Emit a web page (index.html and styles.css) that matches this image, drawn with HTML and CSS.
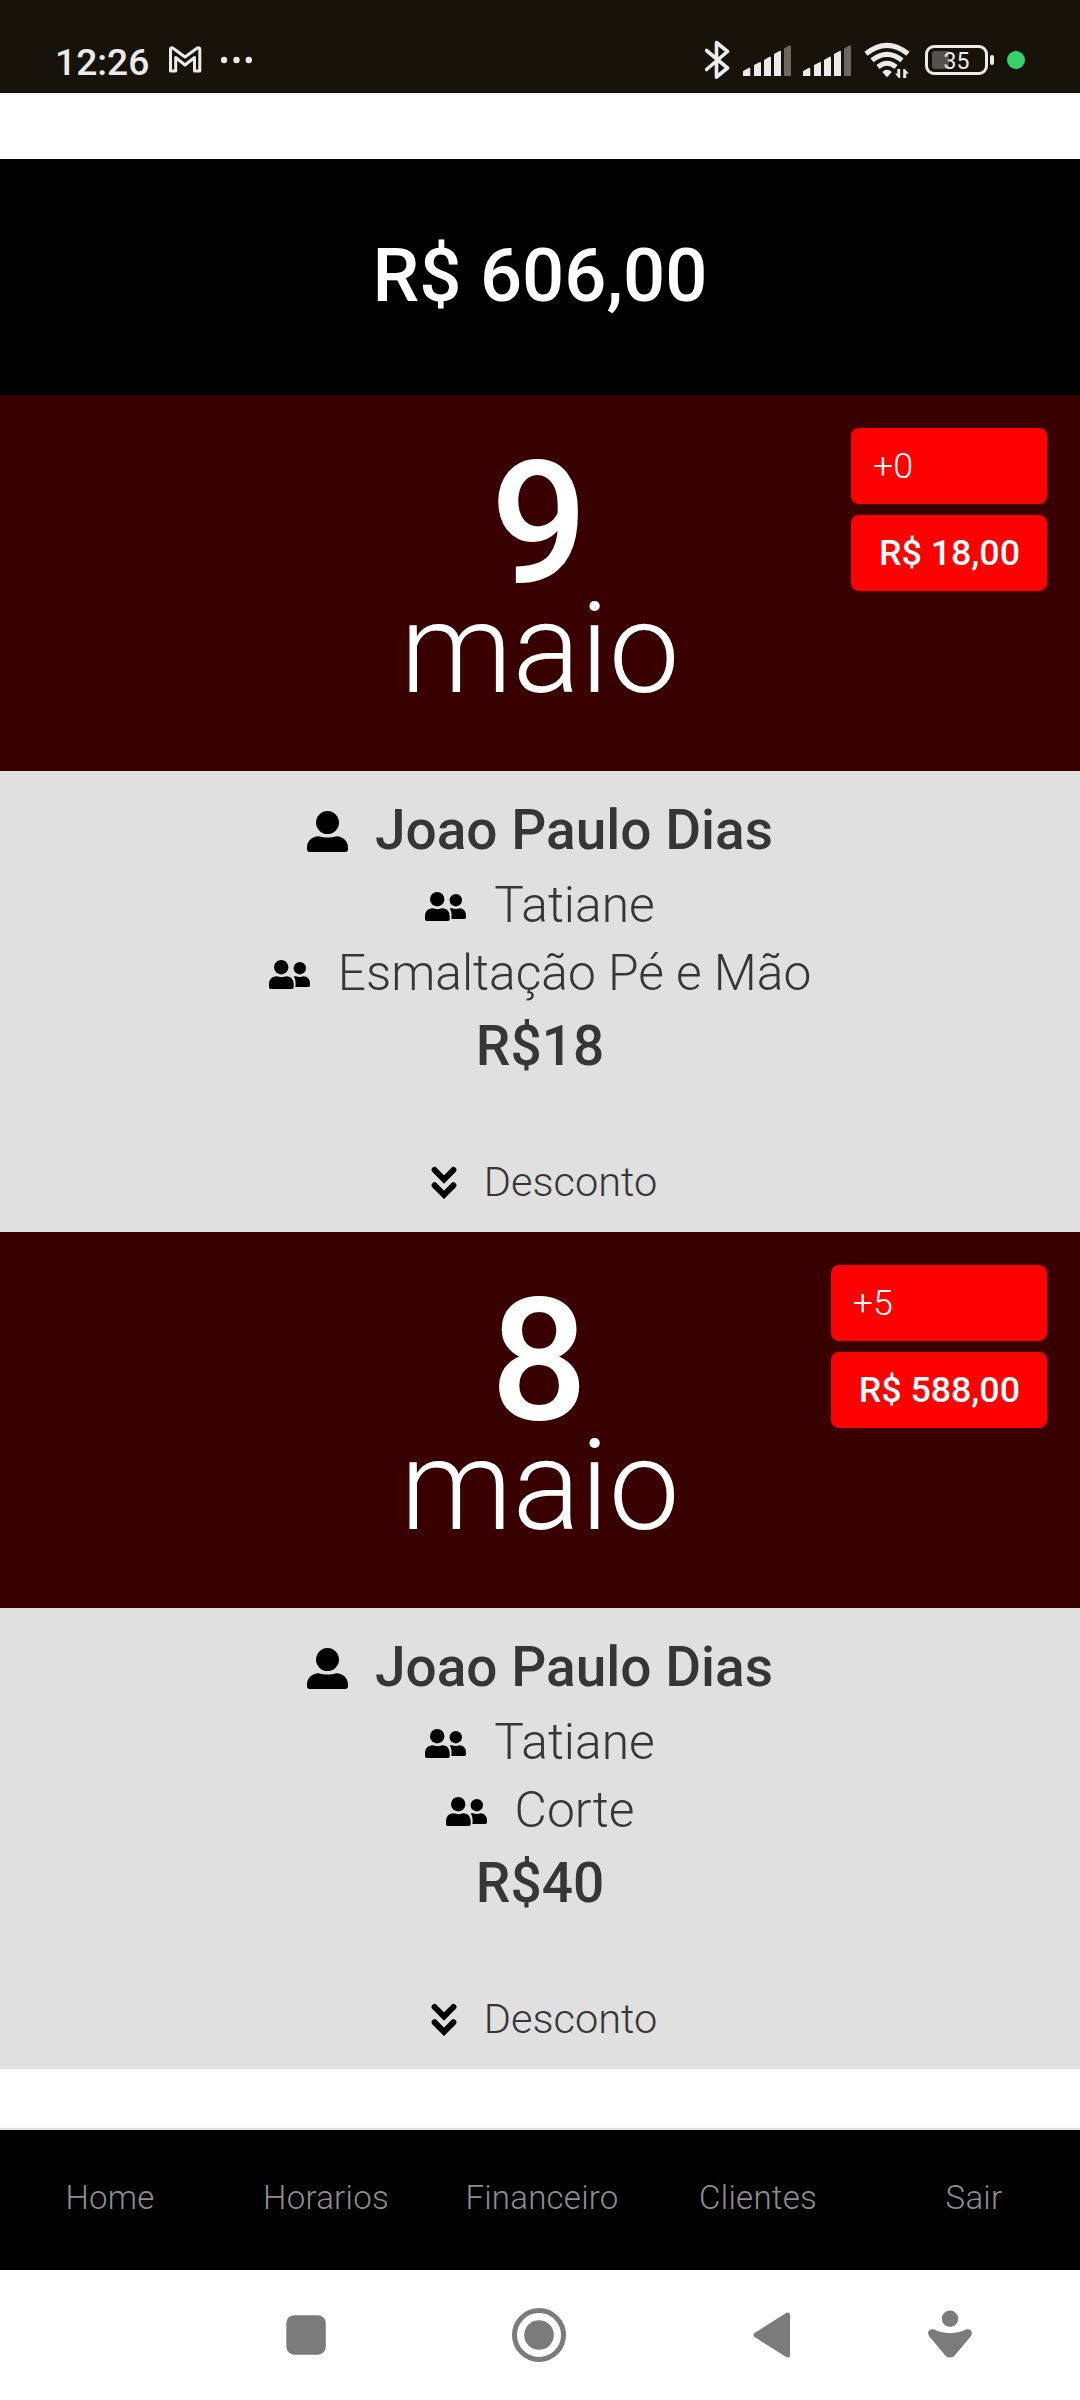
FILE: index.html
```html
<!DOCTYPE html>
<html lang="pt-BR">
<head>
<meta charset="utf-8">
<title>Financeiro</title>
<link rel="stylesheet" href="styles.css">
</head>
<body>
<svg class="defs" width="0" height="0" aria-hidden="true">
  <symbol id="person" viewBox="0 0 41 41">
    <circle cx="20.5" cy="11.6" r="11.5"/>
    <path d="M2.8 41C1 41 0 40 0 38.200V36.500C0 30 5 25.400 11.500 25.200C17 26.900 24 26.900 29.500 25.200C36 25.400 41 30 41 36.500V38.200C41 40 40 41 38.200 41Z"/>
  </symbol>
  <symbol id="persons" viewBox="0 0 41 29">
    <circle cx="12.200" cy="7.200" r="7.200"/>
    <circle cx="30.800" cy="8.200" r="6.200"/>
    <path d="M1.800 29C.6 29 0 28.300 0 27V24.500C0 19.500 3 16.500 7.500 16.300C10.500 17.400 14.500 17.400 17.500 16.300C22 16.500 24.700 19.500 24.700 24.500V27C24.700 28.300 24 29 22.900 29Z"/>
    <path d="M24.700 16.500C25.500 16.200 26.200 16.300 27 16.300C29.500 17.100 32 17.100 34.500 16.300C38.500 16.500 41 19.300 41 23.500V25C41 26.300 40.400 27 39.200 27H26.400C26.800 23.500 26.800 19 24.700 16.500Z"/>
  </symbol>
  <symbol id="chevrons" viewBox="0 0 26 33">
    <path d="M3.600 4L13 13.500L22.400 4M3.600 19.300L13 28.800L22.400 19.300" fill="none" stroke="#000" stroke-width="6" stroke-linecap="round"/>
  </symbol>
  <symbol id="signal" viewBox="0 40 48 40">
    <path d="M0 76V71.500Q0 71 1 70.600L6 67.700Q7.300 67.500 7.300 69V76Z M11 76V65L17 62Q18 62 18 63V76Z M21 76V60L27 56.500Q28 56.500 28 58V76Z M31 76V54L37 50.700Q38 50.700 38 52V76Z"/>
    <path class="signal-off" d="M41 76V48.500L46.500 45.300Q48 45.300 48 47V76Z"/>
  </symbol>
</svg>

<header class="status">
  <span class="clock">12:26</span>
  <svg class="mail" width="34" height="40" viewBox="168 40 34 40"><path d="M170.500 71V49.200Q170.500 47 173 48.200L185 57L197 48.200Q199.800 47 199.800 49.200V71H194.500V57.500L185 65L175.700 57.500V71Z"/></svg>
  <svg class="more" width="32" height="40" viewBox="221 40 32 40"><circle cx="224" cy="60" r="3.200"/><circle cx="236.500" cy="60" r="3.200"/><circle cx="248.800" cy="60" r="3.200"/></svg>
  <div class="status-right">
    <svg class="bluetooth" width="25" height="40" viewBox="705 40 25 40"><path d="M706.500 50.500L727.500 68L716.500 77V42.500L727.500 51.500L706.500 69.500"/></svg>
    <svg class="signal" width="48" height="40"><use href="#signal"/></svg>
    <svg class="signal" width="48" height="40"><use href="#signal"/></svg>
    <svg class="wifi" width="46" height="40" viewBox="864 40 46 40">
      <g class="arcs"><path d="M866 53.800Q887 37 908 53.800"/><path d="M872 60.300Q887 48.500 902 60.300"/><path d="M878 67Q887 59.500 896 67"/></g>
      <path class="solid" d="M882.300 72Q887 67.500 891.800 72L887.800 76.500Q887 77.200 886.200 76.500Z M900.200 69V78H898.800L895 73.500H897.300V69Z M903.200 78V69H904.800L908.800 73.500H906.200V78Z"/>
    </svg>
    <div class="battery">
      <div class="battery-level"></div>
      <span class="battery-text">35</span>
    </div>
    <div class="battery-tip"></div>
    <div class="privacy-dot"></div>
  </div>
</header>

<main class="content">
  <section class="total">R$ 606,00</section>

  <section class="date">
    <div class="day">9</div>
    <div class="month">maio</div>
    <div class="badges">
      <div class="badge count">+0</div>
      <div class="badge amount">R$ 18,00</div>
    </div>
  </section>
  <section class="card">
    <div class="name"><svg width="41" height="41"><use href="#person"/></svg>Joao Paulo Dias</div>
    <div class="line"><svg width="41" height="29"><use href="#persons"/></svg>Tatiane</div>
    <div class="line"><svg width="41" height="29"><use href="#persons"/></svg>Esmaltação Pé e Mão</div>
    <div class="price">R$18</div>
    <div class="discount"><svg width="26" height="33"><use href="#chevrons"/></svg>Desconto</div>
  </section>

  <section class="date">
    <div class="day">8</div>
    <div class="month">maio</div>
    <div class="badges">
      <div class="badge count">+5</div>
      <div class="badge amount">R$ 588,00</div>
    </div>
  </section>
  <section class="card">
    <div class="name"><svg width="41" height="41"><use href="#person"/></svg>Joao Paulo Dias</div>
    <div class="line"><svg width="41" height="29"><use href="#persons"/></svg>Tatiane</div>
    <div class="line"><svg width="41" height="29"><use href="#persons"/></svg>Corte</div>
    <div class="price">R$40</div>
    <div class="discount"><svg width="26" height="33"><use href="#chevrons"/></svg>Desconto</div>
  </section>
</main>

<nav class="tabs">
  <a>Home</a><a>Horarios</a><a>Financeiro</a><a>Clientes</a><a>Sair</a>
</nav>

<footer class="system">
  <svg class="recents" width="40" height="60" viewBox="286 2305 40 60"><rect x="286.300" y="2315.200" width="39.500" height="39.500" rx="8"/></svg>
  <svg class="home" width="54" height="60" viewBox="512 2305 54 60"><circle class="ring" cx="539" cy="2335" r="24.500"/><circle cx="539" cy="2335" r="14.800"/></svg>
  <svg class="back" width="38" height="60" viewBox="753 2305 38 60"><path d="M754.500 2333L786.500 2312.800Q790 2311.500 790 2315V2355Q790 2358.500 786.500 2357.200L754.500 2337Q752.500 2335 754.500 2333Z"/></svg>
  <svg class="assist" width="46" height="60" viewBox="927 2305 46 60"><circle cx="950" cy="2318.800" r="8.200"/><path d="M933.500 2329.300Q950 2337 966.500 2329.300Q970.500 2328.500 971.800 2332Q972.300 2334.500 970.800 2336.300L954.500 2355.700Q950 2359.500 945.500 2355.700L929.200 2336.300Q927.700 2334.500 928.200 2332Q929.500 2328.500 933.500 2329.300Z"/></svg>
</footer>
</body>
</html>
```
FILE: styles.css
```css
* {
  box-sizing: border-box;
}

body {
  margin: 0;
  width: 1080px;
  height: 2400px;
  display: flex;
  flex-direction: column;
  overflow: hidden;
  background: #fff;
  font-family: Roboto, sans-serif;
  font-weight: 320;
}

svg {
  display: block;
  flex: none;
}

.defs {
  position: absolute;
}

/* Status bar */
.status {
  height: 93px;
  padding: 40px 55px 0;
  display: flex;
  align-items: flex-start;
  background: #17130a;
  color: #ebebe9;
  fill: #ebebe9;
}

.clock {
  width: 94px;
  margin-right: 19px;
  font-size: 37.200px;
  font-weight: 500;
  line-height: 45px;
}

.mail {
  fill: none;
  stroke: #ebebe9;
  stroke-width: 3;
  stroke-linejoin: round;
}

.more {
  margin-left: 19px;
}

.status-right {
  margin-left: auto;
  height: 40px;
  display: flex;
  align-items: center;
}

.bluetooth {
  margin-right: 13px;
  fill: none;
  stroke: #ebebe9;
  stroke-width: 3.600;
  stroke-linecap: round;
  stroke-linejoin: round;
}

.signal {
  margin-right: 12px;
}

.signal + .wifi {
  margin: 0 15px 0 1px;
}

.signal-off {
  fill: #6b6761;
}

.arcs {
  fill: none;
  stroke: #ebebe9;
  stroke-width: 5;
}

.battery {
  position: relative;
  width: 63px;
  height: 30px;
  border: 3px solid #ebebe9;
  border-radius: 9px;
}

.battery-level {
  width: 17px;
  height: 18px;
  margin: 3px 0 0 4px;
  border-radius: 3px 0 0 3px;
  background: #56524b;
}

.battery-text {
  position: absolute;
  inset: 0;
  font-size: 23px;
  font-weight: 450;
  line-height: 27px;
  text-align: center;
}

.battery-tip {
  width: 4px;
  height: 10px;
  margin-left: 2px;
  border-radius: 2px;
  background: #ebebe9;
}

.privacy-dot {
  width: 18px;
  height: 18px;
  margin-left: 13px;
  border-radius: 50%;
  background: #37d36b;
}

/* Scrolling content */
.content {
  height: 2037px;
  padding-top: 66px;
}

.total {
  height: 236px;
  padding-top: 73px;
  background: #000;
  color: #fff;
  font-size: 74.250px;
  font-weight: 500;
  line-height: 88px;
  text-align: center;
}

.date {
  position: relative;
  height: 376px;
  padding-top: 68px;
  background: #390000;
  color: #fff;
  text-align: center;
}

.day {
  padding-right: 2px;
  font-size: 171px;
  font-weight: 500;
  line-height: 121px;
}

.month {
  font-size: 126.500px;
  line-height: 131px;
}

.badges {
  position: absolute;
  top: 33px;
  right: 33px;
  display: flex;
  flex-direction: column;
  gap: 11px;
}

.badge {
  height: 76px;
  border-radius: 8px;
  background: #f00;
  font-size: 35.750px;
  line-height: 77px;
}

.count {
  padding-left: 22px;
  text-align: left;
}

.amount {
  padding: 0 27px 0 28px;
  font-weight: 500;
}

.card {
  height: 461px;
  padding-top: 26px;
  background: #e0e0e0;
  color: #363636;
  text-align: center;
}

.card svg {
  fill: #000;
}

.name,
.line,
.discount {
  display: flex;
  justify-content: center;
  align-items: center;
  gap: 27px;
}

.name {
  height: 66px;
  margin-bottom: 8px;
  font-size: 55px;
  font-weight: 500;
}

.line {
  height: 68px;
  gap: 28px;
  font-size: 49.700px;
}

.line svg {
  margin-top: 2px;
}

.name svg {
  margin-top: 3px;
}

.price {
  padding-top: 1px;
  font-size: 55px;
  font-weight: 500;
  line-height: 76px;
}

.discount {
  height: 48px;
  margin-top: 73px;
  font-size: 41.500px;
}

.discount svg {
  margin: 2px 0 0 8px;
}

/* Bottom tabs */
.tabs {
  position: relative;
  height: 140px;
  padding-left: 2px;
  display: grid;
  grid-template-columns: repeat(5, 216px);
  background: #000;
  box-shadow: 0 -2px 1px #dfe0df;
  color: #8e8e8e;
  font-size: 33px;
  letter-spacing: .25px;
  line-height: 136px;
  text-align: center;
}

/* System navigation */
.system {
  height: 130px;
  padding: 35px 0 0 286px;
  display: flex;
  fill: #7b7b7b;
}

.home {
  margin-left: 186px;
}

.ring {
  fill: none;
  stroke: #7b7b7b;
  stroke-width: 5;
}

.back {
  margin-left: 187px;
}

.assist {
  margin-left: 136px;
}
```
